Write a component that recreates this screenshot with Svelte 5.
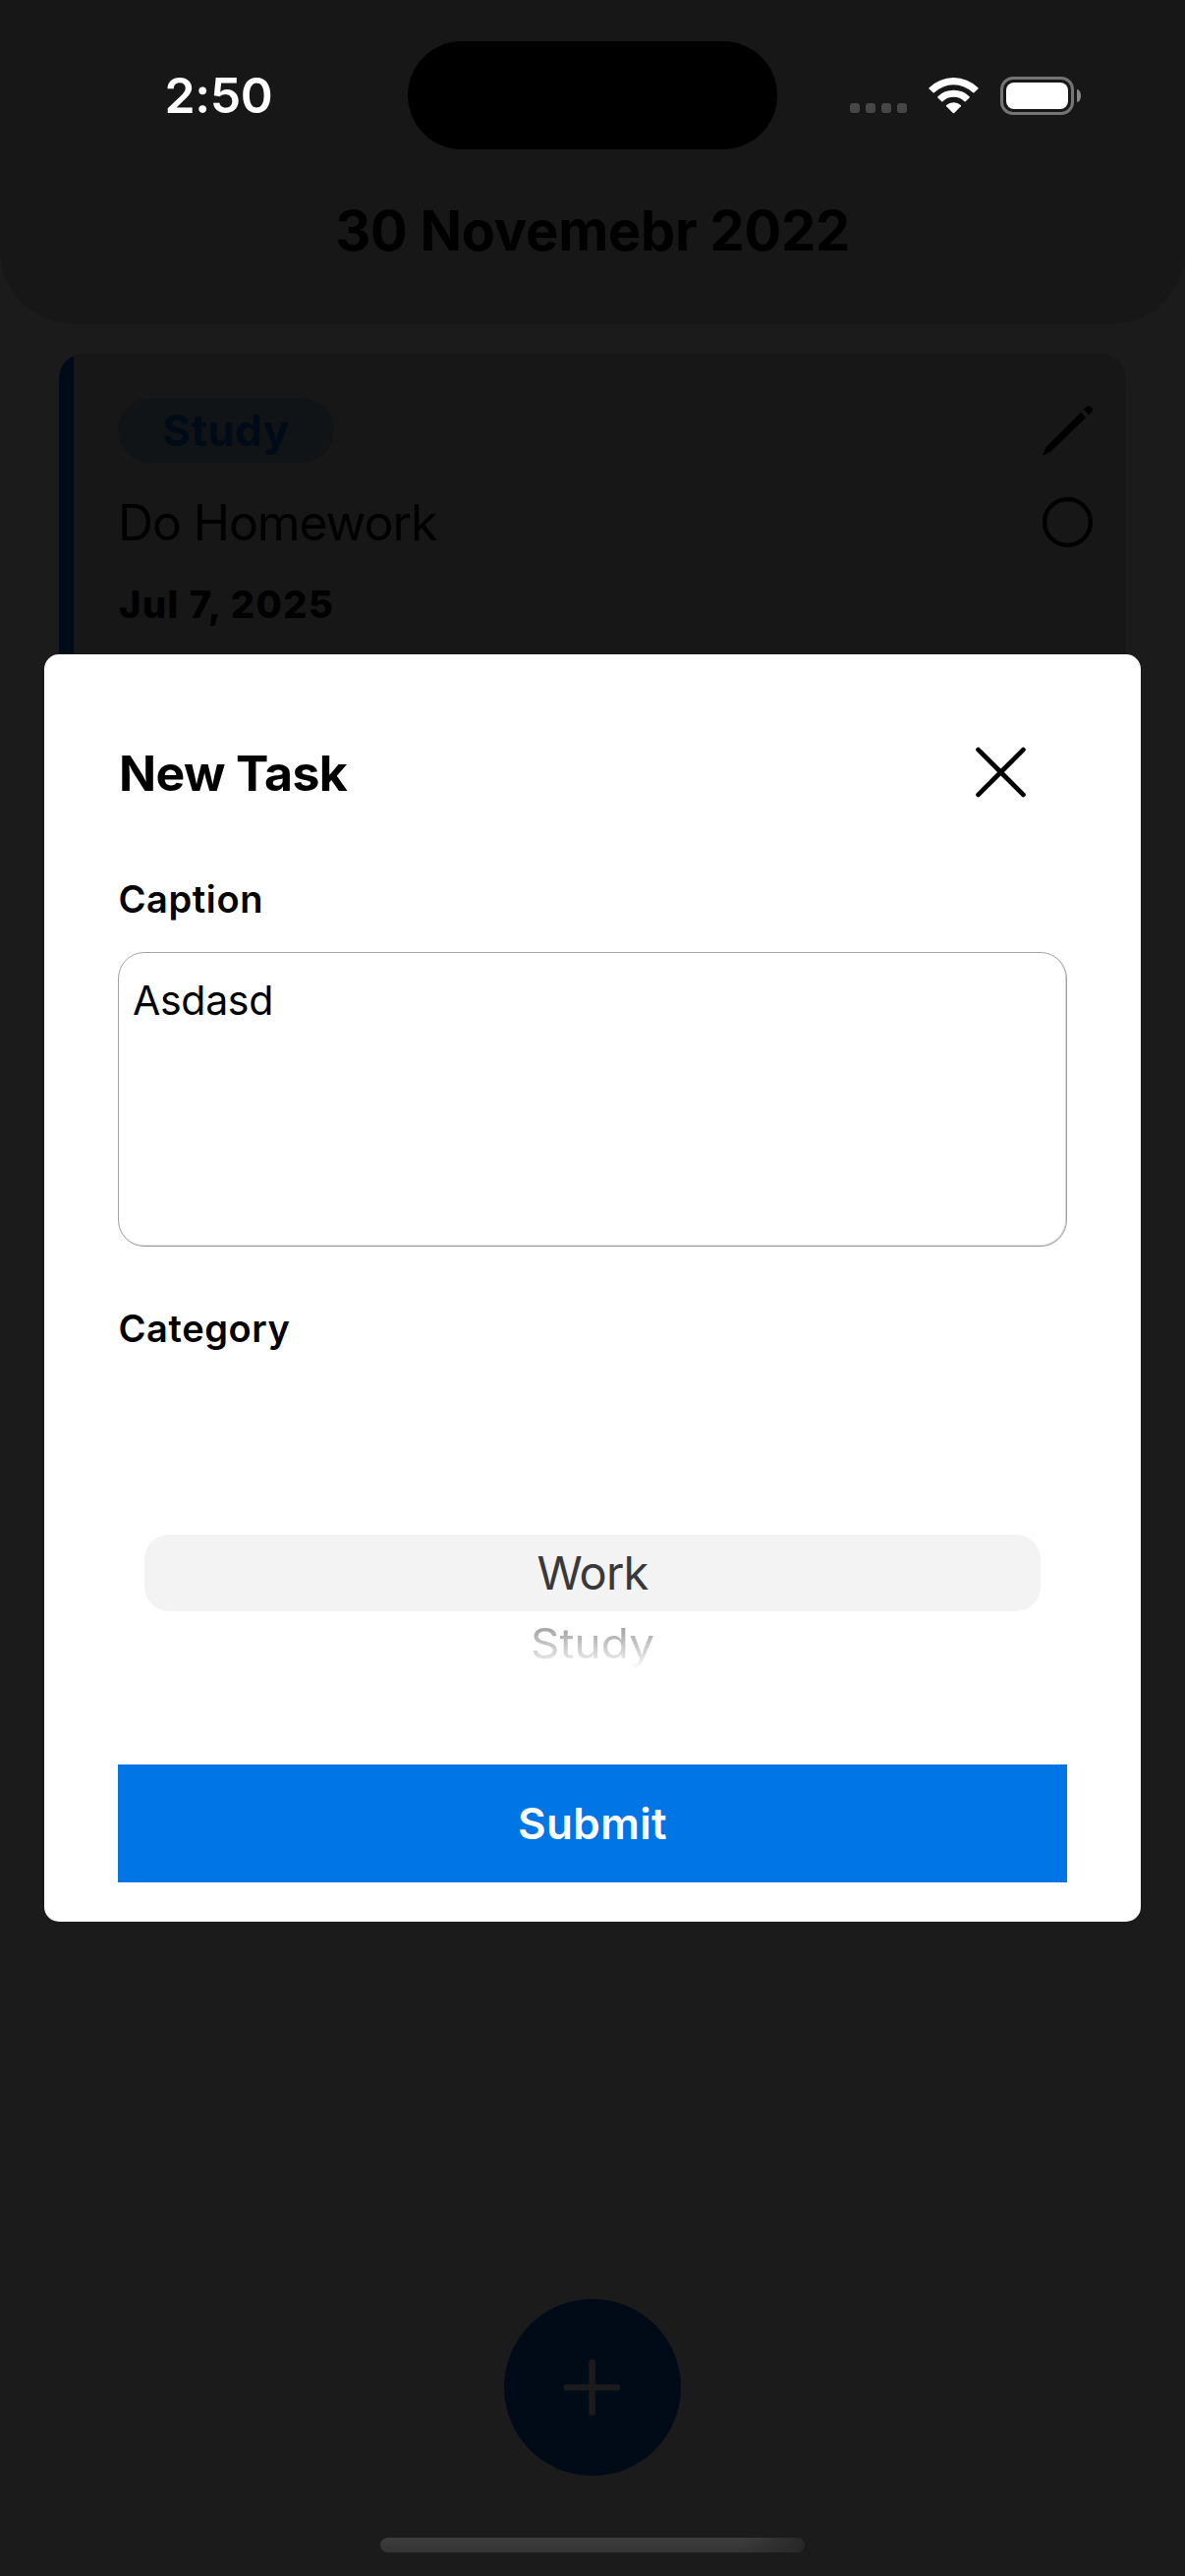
<script>
  let caption = $state('Asdasd');
  const signal = [0, 1, 2, 3];
</script>

<div class="screen">
  <header class="header">
    <div class="status">
      <div class="time">2:50</div>
      <div class="island"></div>
      <div class="indicators">
        <div class="signal">
          {#each signal as dot (dot)}<i></i>{/each}
        </div>
        <svg class="wifi" viewBox="0 0 51 38" width="51" height="38">
          <path d="M0.6 11.2 A35.5 35.5 0 0 1 50.4 11.2 Q51 11.8 50.4 12.4 L46.4 16.3 Q45.8 16.8 45.2 16.3 A28.3 28.3 0 0 0 5.8 16.3 Q5.2 16.8 4.6 16.3 L0.6 12.4 Q0 11.8 0.6 11.2Z" />
          <path d="M9.4 20.2 A23 23 0 0 1 41.6 20.2 Q42.2 20.8 41.6 21.4 L37.7 25.2 Q37.1 25.7 36.5 25.2 A16 16 0 0 0 14.5 25.2 Q13.9 25.7 13.3 25.2 L9.4 21.4 Q8.8 20.8 9.4 20.2Z" />
          <path d="M18.2 29 A10.8 10.8 0 0 1 32.8 29 Q33.4 29.6 32.8 30.3 L26.2 37 Q25.5 37.6 24.8 37 L18.2 30.3 Q17.6 29.6 18.2 29Z" />
        </svg>
        <div class="battery"><div class="shell"><div class="charge"></div></div><div class="nub"></div></div>
      </div>
    </div>
    <h1>30 Novemebr 2022</h1>
  </header>

  <main>
    <article class="card">
      <div class="info">
        <span class="chip">Study</span>
        <p class="name">Do Homework</p>
        <p class="date">Jul 7, 2025</p>
      </div>
      <div class="actions">
        <svg viewBox="0 0 51 51" width="51" height="51">
          <path d="M42 3.8 L44.8 1.2 Q47 -0.8 49.4 1.4 Q52 3.8 50 6.2 L47 9.3Z" />
          <path d="M39.2 6.8 L44 12.2 L9.5 45.6 Q8.7 46.4 7.5 47 L0.9 50.5 Q-0.1 50.8 0.4 49.8 L3.2 43.2 Q3.6 42 4.6 41Z" />
        </svg>
        <svg viewBox="0 0 51 51" width="51" height="51"><circle cx="25.5" cy="25.5" r="23.4" /></svg>
      </div>
    </article>
  </main>

  <footer>
    <div class="fab">
      <svg viewBox="0 0 58 58" width="58" height="58"><path d="M28.5 3.5V54.5M3 29H54" /></svg>
    </div>
    <div class="home"></div>
  </footer>

  <section class="modal">
    <div class="modal-head">
      <h2>New Task</h2>
      <svg viewBox="0 0 51 51" width="51" height="51"><path d="M2.6 2.1L48.4 47.9M48.4 2.1L2.6 47.9" /></svg>
    </div>
    <h3>Caption</h3>
    <textarea bind:value={caption} spellcheck="false"></textarea>
    <h3 class="category">Category</h3>
    <div class="picker">
      <div class="selected"><span>Work</span></div>
      <div class="next"><span>Study</span></div>
    </div>
    <button>Submit</button>
  </section>
</div>

<style>
  :global(body) {
    margin: 0;
    background: #1b1b1b;
  }
  .screen {
    position: relative;
    display: flex;
    flex-direction: column;
    width: 1206px;
    height: 2622px;
    overflow: hidden;
    background: #1b1b1b;
    color: #000;
    font-family: Inter, 'Liberation Sans', sans-serif;
  }
  h1, h2, h3, p { margin: 0; white-space: nowrap; }
  svg { display: block; overflow: visible; flex: none; }

  .header {
    height: 330px;
    border-radius: 0 0 76px 76px;
    background: #171717;
  }
  .status {
    display: grid;
    grid-template-columns: 415px 376px 415px;
    align-items: center;
    height: 110px;
    padding-top: 42px;
  }
  .time {
    padding-left: 30px;
    color: #fff;
    font-size: 50px;
    font-weight: 600;
    letter-spacing: -0.4px;
    line-height: 60px;
    text-align: center;
  }
  .island {
    height: 110px;
    border-radius: 55px;
    background: #000;
  }
  .indicators {
    display: flex;
    align-items: center;
    height: 40px;
    padding-left: 74px;
  }
  .signal { display: flex; gap: 6px; margin-top: 26px; }
  .signal i { width: 10px; height: 10px; border-radius: 3px; background: #474747; }
  .wifi { margin-left: 22px; fill: #fff; }
  .battery { display: flex; align-items: center; gap: 3px; margin-left: 22px; }
  .shell {
    box-sizing: border-box;
    width: 75px;
    height: 39px;
    padding: 3px;
    border: 3px solid #747474;
    border-radius: 13px;
  }
  .charge { height: 27px; border-radius: 8px; background: #fff; }
  .nub { width: 4px; height: 13px; border-radius: 0 4px 4px 0 / 0 6px 6px 0; background: #858585; }
  h1 {
    margin-top: 48px;
    font-size: 56px;
    font-weight: 700;
    letter-spacing: -0.3px;
    line-height: 70px;
    text-align: center;
  }

  main { flex: 1; padding: 30px 60px 0; }
  .card {
    box-sizing: border-box;
    display: flex;
    justify-content: space-between;
    height: 360px;
    padding: 45px 34px 0 60px;
    border-radius: 25px;
    background: linear-gradient(to right, #000b17 15px, #171717 15px);
  }
  .info { display: flex; flex-direction: column; align-items: flex-start; }
  .chip {
    box-sizing: border-box;
    width: 220px;
    height: 66px;
    border-radius: 33px;
    background: #101416;
    color: #000b17;
    font-size: 44px;
    font-weight: 700;
    letter-spacing: 0.5px;
    line-height: 66px;
    text-align: center;
  }
  .name {
    margin-top: 31px;
    font-size: 50px;
    font-weight: 400;
    letter-spacing: -1.1px;
    line-height: 60px;
  }
  .date {
    margin-top: 28px;
    padding-left: 1px;
    font-size: 38px;
    font-weight: 800;
    letter-spacing: 1.5px;
    line-height: 50px;
  }
  .actions { display: flex; flex-direction: column; gap: 42px; padding-top: 8px; }
  .actions circle { fill: none; stroke: #000; stroke-width: 4.2; }

  footer { display: flex; flex-direction: column; align-items: center; height: 282px; }
  .fab {
    display: flex;
    align-items: center;
    justify-content: center;
    width: 180px;
    height: 180px;
    border-radius: 50%;
    background: #000b17;
  }
  .fab svg { fill: none; stroke: #1b1b1b; stroke-width: 6.6; stroke-linecap: round; }
  .home {
    width: 432px;
    height: 15px;
    margin-top: 63px;
    border-radius: 8px;
    background:
      linear-gradient(100deg, transparent 85%, #272727 100%),
      linear-gradient(#3d3d3d, #343434);
  }

  /* Dialog floating above the dimmed task list */
  .modal {
    position: absolute;
    top: 666px;
    left: 45px;
    box-sizing: border-box;
    display: flex;
    flex-direction: column;
    width: 1116px;
    height: 1290px;
    padding: 90px 75px 40px;
    border-radius: 15px;
    background: #fff;
  }
  .modal-head {
    display: flex;
    align-items: center;
    justify-content: space-between;
    height: 60px;
    padding-right: 42px;
  }
  .modal-head svg { fill: none; stroke: #000; stroke-width: 4.8; stroke-linecap: round; }
  h2 { padding: 1px 0 0 1px; font-size: 50px; font-weight: 700; letter-spacing: -0.65px; line-height: 60px; }
  h3 {
    margin-top: 74px;
    padding-left: 0.5px;
    font-size: 38px;
    font-weight: 600;
    letter-spacing: 0.6px;
    line-height: 50px;
  }
  textarea {
    box-sizing: border-box;
    width: 966px;
    height: 300px;
    margin-top: 29px;
    padding: 23px 14px;
    border: 1px solid #a4a4a4;
    border-radius: 27px;
    box-shadow: inset -0.5px -0.5px 0 0.3px #c8c8c8;
    outline: none;
    background: #fff;
    resize: none;
    color: #000;
    font: 400 41px/50px Inter, 'Liberation Sans', sans-serif;
    letter-spacing: -0.3px;
  }
  h3.category { margin-top: 58px; }
  .picker {
    height: 294px;
    margin-top: 125px;
    padding: 60px 27px 0;
    margin-bottom: auto;
    box-sizing: border-box;
    text-align: center;
  }
  .selected {
    height: 78px;
    border-radius: 25px;
    background: #f3f3f3;
    color: #393939;
    font-size: 47px;
    letter-spacing: -0.8px;
    line-height: 78px;
  }
  .next { height: 64px; font-size: 46px; line-height: 64px; }
  .next span {
    display: inline-block;
    background: linear-gradient(#a4a4a4 25%, #dadada 70%, #fff 96%);
    background-clip: text;
    color: transparent;
    transform: scaleY(0.92);
  }
  button {
    flex: none;
    height: 120px;
    padding: 0;
    border: 0;
    background: #0076e6;
    color: #fff;
    font: 600 44px/120px Inter, 'Liberation Sans', sans-serif;
    letter-spacing: 0.4px;
  }
</style>
